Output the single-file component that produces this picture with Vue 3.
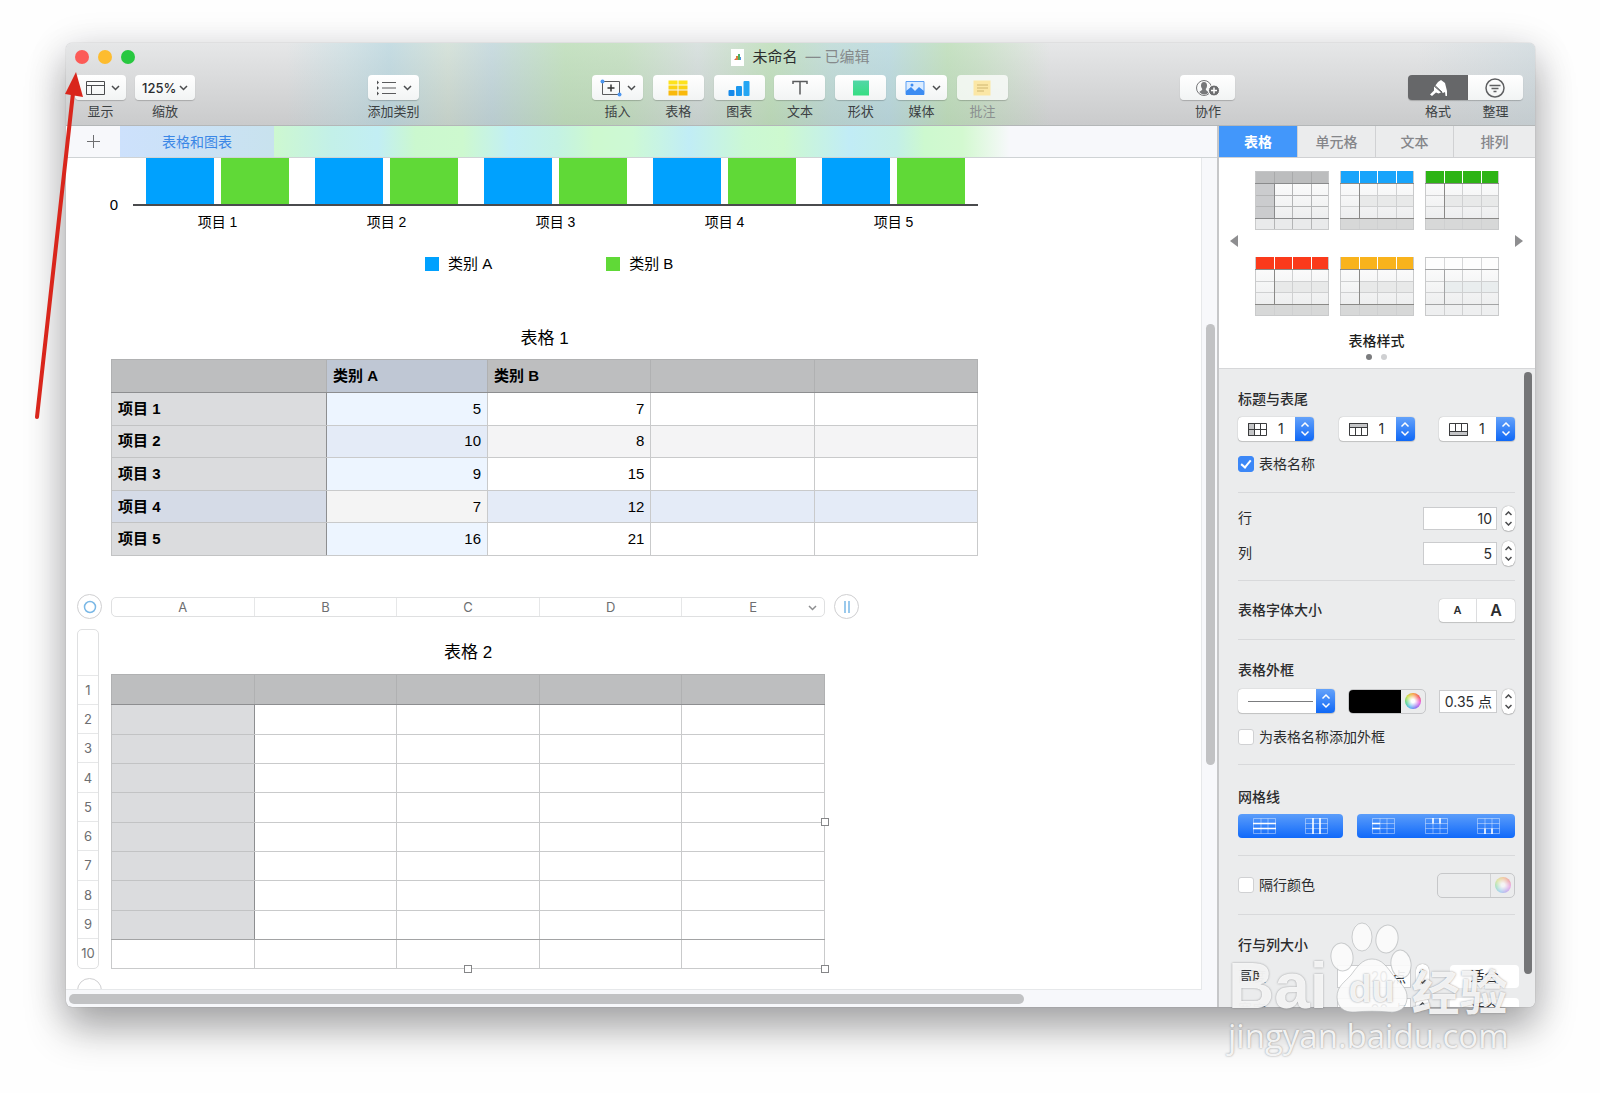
<template>
  <div class="desktop">
    <div class="window">
      <header class="toolbar">
        <div class="title-row">
          <div class="lights">
            <button class="light red" aria-label="关闭" />
            <button class="light yellow" aria-label="最小化" />
            <button class="light green" aria-label="缩放窗口" />
          </div>
          <div class="title">
            <svg width="13" height="17" viewBox="0 0 13 17">
              <rect width="13" height="17" fill="#fff" />
              <path d="M3 11l2-2v2z" fill="#e2574c" />
              <rect x="5" y="7" width="2" height="4" fill="#d9823b" />
              <rect x="7" y="5" width="2" height="6" fill="#4fae62" />
              <rect x="9" y="8" width="1" height="3" fill="#4a90d9" />
            </svg>
            <span>未命名</span>
            <span class="edited">— 已编辑</span>
          </div>
        </div>

        <div class="tools">
          <div v-for="(group, g) in toolGroups" :key="g" class="tool-group" :class="group.kind">
            <div v-for="t in group.items" :key="t.label" class="tool" :class="{ dim: t.dim, on: t.on }">
              <label v-if="t.zoom" class="tool-btn">
                <select v-model="zoom" class="zoom-select" aria-label="缩放">
                  <option>100%</option>
                  <option>125%</option>
                  <option>150%</option>
                </select>
                <svg class="chevron" width="9" height="6" viewBox="0 0 9 6"><path d="M1 1l3.500 3.500L8 1" /></svg>
              </label>
              <button v-else class="tool-btn" :aria-label="t.label">
                <svg width="24" height="20" viewBox="0 0 24 20" fill="none" v-html="icons[t.icon]" />
                <svg v-if="t.menu" class="chevron" width="9" height="6" viewBox="0 0 9 6"><path d="M1 1l3.500 3.500L8 1" /></svg>
              </button>
              <span class="tool-label">{{ t.label }}</span>
            </div>
          </div>
        </div>
      </header>

      <div class="body">
        <main class="editor">
          <nav class="sheets">
            <button class="add-sheet" aria-label="添加工作表">
              <svg width="13" height="13" viewBox="0 0 13 13"><path d="M6.500 0v13M0 6.500h13" stroke="#6d6e70" /></svg>
            </button>
            <button class="sheet-tab">表格和图表</button>
            <div class="sheet-blur" />
          </nav>

          <div class="canvas">
            <div class="sheet">
              <section class="chart">
                <div class="y-axis">0</div>
                <div class="plot">
                  <div v-for="n in 5" :key="n" class="category">
                    <div class="bars">
                      <i class="bar a" />
                      <i class="bar b" />
                    </div>
                    <span>项目 {{ n }}</span>
                  </div>
                </div>
              </section>
              <div class="legend">
                <span><i class="a" />类别 A</span>
                <span><i class="b" />类别 B</span>
              </div>

              <table class="grid first">
                <caption>表格 1</caption>
                <colgroup>
                  <col class="c0"><col class="c1"><col class="c2"><col class="c2"><col class="c2">
                </colgroup>
                <thead>
                  <tr><th /><th class="picked">类别 A</th><th>类别 B</th><th /><th /></tr>
                </thead>
                <tbody>
                  <tr v-for="(r, i) in rows" :key="i">
                    <th scope="row">项目 {{ i + 1 }}</th>
                    <td>{{ r[0] }}</td>
                    <td>{{ r[1] }}</td>
                    <td /><td />
                  </tr>
                </tbody>
              </table>

              <div class="table-frame">
                <button class="round" aria-label="移动表格">
                  <svg width="14" height="14" viewBox="0 0 14 14"><circle cx="7" cy="7" r="5.500" fill="none" stroke="#7ab8e6" stroke-width="1.500" /></svg>
                </button>
                <div class="col-bar">
                  <span v-for="c in 'ABCDE'" :key="c">{{ c }}</span>
                  <svg class="chevron col-menu" width="9" height="6" viewBox="0 0 9 6"><path d="M1 1l3.500 3.500L8 1" /></svg>
                </div>
                <button class="round" aria-label="添加列">
                  <svg width="14" height="14" viewBox="0 0 14 14"><path d="M5 1v12M9 1v12" stroke="#7ab8e6" stroke-width="1.500" /></svg>
                </button>

                <div class="row-bar">
                  <span class="row-title" />
                  <span v-for="n in 10" :key="n">{{ n }}</span>
                </div>
                <div class="second-wrap">
                  <table class="grid second">
                    <caption>表格 2</caption>
                    <thead>
                      <tr><th v-for="n in 5" :key="n" /></tr>
                    </thead>
                    <tbody>
                      <tr v-for="n in 8" :key="n"><th /><td v-for="m in 4" :key="m" /></tr>
                    </tbody>
                    <tfoot>
                      <tr><td v-for="n in 5" :key="n" /></tr>
                    </tfoot>
                  </table>
                  <i class="handle right" />
                  <i class="handle bottom" />
                  <i class="handle corner" />
                </div>
                <span />

                <button class="round" aria-label="添加行">
                  <svg width="14" height="14" viewBox="0 0 14 14"><path d="M1 6h12M1 10h12" stroke="#7ab8e6" stroke-width="1.500" /></svg>
                </button>
              </div>
            </div>
            <div class="v-track"><i /></div>
          </div>
          <div class="h-track"><i /></div>
        </main>

        <aside class="inspector">
          <nav class="tabs">
            <button v-for="t in tabs" :key="t" :class="{ active: t === tab }" @click="tab = t">{{ t }}</button>
          </nav>

          <div class="styles">
            <div class="style-row">
              <button class="pager" aria-label="上一页">
                <svg width="8" height="12" viewBox="0 0 8 12"><path d="M8 0v12L0 6z" fill="#8e8e90" /></svg>
              </button>
              <div class="thumbs">
                <button v-for="s in tableStyles" :key="s.head" class="thumb" :aria-label="s.name">
                  <svg width="74" height="59" viewBox="0 0 74 59">
                    <defs>
                      <linearGradient :id="'body-' + s.name" x2="0" y2="1">
                        <stop offset="0" stop-color="#fff" /><stop offset="1" stop-color="#e9eaeb" />
                      </linearGradient>
                    </defs>
                    <rect width="74" height="59" :fill="`url(#body-${s.name})`" />
                    <rect v-if="s.side" y="12" width="19" height="35" :fill="s.side" />
                    <rect v-if="!s.side" x="19" y="24" width="55" height="11" :fill="s.band" />
                    <rect y="47" width="74" height="12" :fill="s.foot" />
                    <path d="M0 24.500h74M0 35.500h74M19.500 12v47M37.500 12v47M56.500 12v47" :stroke="s.side ? '#b4b5b6' : '#cfd0d1'" />
                    <rect width="74" height="12" :fill="s.head" />
                    <path d="M19.500 0v12M37.500 0v12M56.500 0v12" :stroke="s.split" />
                    <path d="M.5 0v59M73.500 0v59M0 58.500h74" stroke="#c9cacb" />
                    <path d="M0 12.500h74M0 47.500h74M19.500 12v35" :stroke="s.rule" />
                    <path v-if="s.split !== '#fff'" d="M0 .5h74" stroke="#c4c5c6" />
                  </svg>
                </button>
              </div>
              <button class="pager" aria-label="下一页">
                <svg width="8" height="12" viewBox="0 0 8 12"><path d="M0 0v12l8-6z" fill="#8e8e90" /></svg>
              </button>
            </div>
            <h3>表格样式</h3>
            <div class="dots"><i class="current" /><i /></div>
          </div>

          <div class="panel">
            <section class="sec headers">
              <h4>标题与表尾</h4>
              <div class="line spread">
                <div v-for="p in counts" :key="p.name" class="popup">
                  <svg width="19" height="13" viewBox="0 0 19 13" fill="none" stroke="#3a3b3d" v-html="p.icon" />
                  <select v-model="p.value" :aria-label="p.name"><option>0</option><option>1</option><option>2</option></select>
                  <span class="updown"><svg width="10" height="16" viewBox="0 0 10 16"><path d="M1.500 5.500L5 2l3.500 3.500M1.500 10.500L5 14l3.500-3.500" /></svg></span>
                </div>
              </div>
              <label class="check"><input v-model="showName" type="checkbox">表格名称</label>
            </section>

            <section class="sec sizes">
              <div class="line">
                <label for="rowCount">行</label>
                <input id="rowCount" class="field wide" value="10">
                <span class="stepper"><button aria-label="增加行"><svg width="7" height="5" viewBox="0 0 7 5"><path d="M.5 4l3-3 3 3" /></svg></button><button aria-label="减少行"><svg width="7" height="5" viewBox="0 0 7 5"><path d="M.5 1l3 3 3-3" /></svg></button></span>
              </div>
              <div class="line">
                <label for="colCount">列</label>
                <input id="colCount" class="field wide" value="5">
                <span class="stepper"><button aria-label="增加列"><svg width="7" height="5" viewBox="0 0 7 5"><path d="M.5 4l3-3 3 3" /></svg></button><button aria-label="减少列"><svg width="7" height="5" viewBox="0 0 7 5"><path d="M.5 1l3 3 3-3" /></svg></button></span>
              </div>
            </section>

            <section class="sec">
              <div class="line">
                <h4>表格字体大小</h4>
                <div class="font-size">
                  <button class="small" aria-label="缩小字体">A</button>
                  <button class="big" aria-label="放大字体">A</button>
                </div>
              </div>
            </section>

            <section class="sec outline">
              <h4>表格外框</h4>
              <div class="line spread">
                <div class="popup stroke">
                  <select aria-label="外框线型"><option>&nbsp;</option></select>
                  <span class="updown"><svg width="10" height="16" viewBox="0 0 10 16"><path d="M1.500 5.500L5 2l3.500 3.500M1.500 10.500L5 14l3.500-3.500" /></svg></span>
                </div>
                <div class="well black">
                  <button class="color" aria-label="外框颜色" />
                  <button class="wheel" aria-label="色盘"><i /></button>
                </div>
                <div class="line">
                  <input class="field points" value="0.35 点" aria-label="外框粗细">
                  <span class="stepper"><button aria-label="加粗"><svg width="7" height="5" viewBox="0 0 7 5"><path d="M.5 4l3-3 3 3" /></svg></button><button aria-label="减细"><svg width="7" height="5" viewBox="0 0 7 5"><path d="M.5 1l3 3 3-3" /></svg></button></span>
                </div>
              </div>
              <label class="check"><input type="checkbox">为表格名称添加外框</label>
            </section>

            <section class="sec gridlines">
              <h4>网格线</h4>
              <div class="line toggles">
                <div v-for="(set, i) in gridToggles" :key="i" class="toggle-set" :class="{ three: set.length === 3 }">
                  <button v-for="b in set" :key="b.name" :aria-label="b.name">
                    <svg width="23" height="16" viewBox="0 0 23 16" fill="none">
                      <path d="M.5.5h22v15H.5zM.5 5.500h22M.5 10.500h22M8 .5v15M15 .5v15" stroke="#fff" stroke-opacity=".4" />
                      <path :d="b.d" stroke="#fff" stroke-width="1.500" />
                    </svg>
                  </button>
                </div>
              </div>
            </section>

            <section class="sec">
              <div class="line">
                <label class="check"><input type="checkbox">隔行颜色</label>
                <div class="well off">
                  <button class="color" disabled aria-label="隔行颜色" />
                  <button class="wheel" disabled aria-label="隔行色盘"><i /></button>
                </div>
              </div>
            </section>

            <section class="sec dims">
              <h4>行与列大小</h4>
              <div v-for="d in dims" :key="d.name" class="line">
                <label :for="d.id">{{ d.name }}</label>
                <input :id="d.id" class="field wide" :value="d.value">
                <span class="stepper"><button :aria-label="'增加' + d.name"><svg width="7" height="5" viewBox="0 0 7 5"><path d="M.5 4l3-3 3 3" /></svg></button><button :aria-label="'减少' + d.name"><svg width="7" height="5" viewBox="0 0 7 5"><path d="M.5 1l3 3 3-3" /></svg></button></span>
                <button class="fit">适合</button>
              </div>
            </section>
            <i class="panel-thumb" />
          </div>
        </aside>
      </div>
    </div>

    <!-- 红色箭头 -->
    <svg class="arrow" width="60" height="350" viewBox="0 0 60 350">
      <path d="M8 346L44 22" stroke="#d9261c" stroke-width="4" stroke-linecap="round" />
      <path d="M47 1L36 23l18 3z" fill="#d9261c" />
    </svg>

    <!-- 水印 -->
    <div class="watermark">
      <div class="mark-row">
        <span class="bai">Bai</span>
        <span class="paw">
          <svg width="84" height="92" viewBox="0 0 84 92" fill="#fbfbfb" fill-opacity=".92" stroke="#aeb0b2" stroke-opacity=".6">
            <ellipse cx="14" cy="35" rx="11" ry="14" transform="rotate(-8 14 35)" />
            <ellipse cx="34" cy="15" rx="10" ry="14" />
            <ellipse cx="59" cy="17" rx="11" ry="14" transform="rotate(10 59 17)" />
            <ellipse cx="73" cy="42" rx="10" ry="14" transform="rotate(-8 73 42)" />
            <path d="M44 37c10 0 15 8 21 16 6 8 15 12 14 24-1 10-9 14-18 13-11-1-23-1-34 0C16 91 9 85 9 75c0-11 8-15 14-22 6-8 11-16 21-16z" />
          </svg>
          <span class="du">du</span>
        </span>
        <span class="jy">经验</span>
      </div>
      <div class="mark-url">jingyan.baidu.com</div>
    </div>
  </div>
</template>

<script setup>
import { ref, reactive } from 'vue'

const zoom = ref('125%')
const tab = ref('表格')
const tabs = ['表格', '单元格', '文本', '排列']
const showName = ref(true)

const rows = [[5, 7], [10, 8], [9, 15], [7, 12], [16, 21]]

const toolGroups = [
  { kind: 'left', items: [
    { label: '显示', icon: 'view', menu: true },
    { label: '缩放', zoom: true }
  ] },
  { kind: 'single', items: [{ label: '添加类别', icon: 'list', menu: true }] },
  { kind: 'insert', items: [
    { label: '插入', icon: 'insert', menu: true },
    { label: '表格', icon: 'table' },
    { label: '图表', icon: 'chart' },
    { label: '文本', icon: 'text' },
    { label: '形状', icon: 'shape' },
    { label: '媒体', icon: 'media', menu: true },
    { label: '批注', icon: 'note', dim: true }
  ] },
  { kind: 'share', items: [{ label: '协作', icon: 'people' }] },
  { kind: 'segment', items: [
    { label: '格式', icon: 'brush', on: true },
    { label: '整理', icon: 'filter' }
  ] }
]

const icons = {
  view: '<path d="M4.500 3.500h18v13h-18zM4.500 7.500h18M9.500 7.500v9" stroke="#4b4c4e"/>',
  list: '<path d="M8 4.500h14M8 10h14M8 15.500h14" stroke="#5a5b5d"/><path d="M3 2.500v4l2-2zM3 8v4l2-2zM3 13.500v4l2-2z" fill="#4b4c4e"/>',
  insert: '<path d="M4.500 3.500h17v13h-17z" stroke="#5a5b5d"/><path d="M13 6.500v7M9.500 10h7" stroke="#333" stroke-width="1.500"/><circle cx="4.500" cy="3.500" r="2" fill="#4c96f0"/><circle cx="21.500" cy="16.500" r="2" fill="#4c96f0"/>',
  table: '<path d="M2.500 2.500h9v4h-9zM12.500 2.500h9v4h-9z" fill="#fde21c"/><path d="M2.500 7.500h9v4h-9zM12.500 7.500h9v4h-9z" fill="#fbd312"/><path d="M2.500 12.500h9v5h-9zM12.500 12.500h9v5h-9z" fill="#f9b90b"/>',
  chart: '<rect x="1.500" y="12" width="6" height="6" rx="1" fill="#1689ea"/><rect x="9" y="8" width="6" height="10" rx="1" fill="#1b97ee"/><rect x="16.500" y="3" width="6" height="15" rx="1" fill="#25a6f3"/>',
  text: '<path d="M5 6V3.500h14V6M12 3.500v13" stroke="#5a5b5d" stroke-width="1.500"/>',
  shape: '<defs><linearGradient id="g-shape" x2="0" y2="1"><stop stop-color="#52d6a8"/><stop offset="1" stop-color="#36de82"/></linearGradient></defs><rect x="4" y="2.500" width="16" height="15" fill="url(#g-shape)"/>',
  media: '<path d="M3 3.500h18v13H3z" fill="#dcecff" stroke="#5b9ff5"/><path d="M3 13l5-4 4 4 4-4 5 4v4H3z" fill="#3d8cf2"/><circle cx="9" cy="7" r="1.500" fill="#3d8cf2"/>',
  note: '<path d="M3.500 2.500h17v15h-17z" fill="#fbe7a6"/><path d="M7 7h11M7 10h11M7 13h7" stroke="#cfb670"/>',
  people: '<circle cx="8" cy="10" r="7.500" stroke="#77787a"/><path d="M8 4c-2 0-3 1.500-3 3.500 0 1.700.7 2.700 1.300 3.400 0 1.600-1.800 1.600-3 3.100A6.500 6.500 0 0 0 8 16.500c2 0 3.500-.7 4.500-2-1-1.600-2.800-1.900-2.800-3.500C10.300 10.300 11 9.300 11 7.500 11 5.500 10 4 8 4z" fill="#77787a"/><circle cx="18" cy="12.500" r="5.500" fill="#6b6c6e" stroke="#fff"/><path d="M18 9.500v6M15 12.500h6" stroke="#fff" stroke-width="1.500"/>',
  brush: '<path d="M12 4l3-2 4 3 2 8v5h-1.500l-.500-4-2 1-8-7z" fill="#fff"/><path d="M8 8.500l7 6-2.500 1-2.500-1-4 3.500-2-1.500 4-4z" fill="#fff"/><path d="M9 7.500l7 6.500" stroke="#666769"/>',
  filter: '<circle cx="12" cy="10" r="9" stroke="#5f6062" stroke-width="1.500"/><path d="M6.500 7.500h11M8.500 10.500h7M10.500 13.500h3" stroke="#5f6062" stroke-width="1.500"/>'
}

const tableStyles = [
  { name: 'gray', head: '#bcbdbe', split: '#a9aaab', side: '#cbccce', foot: '#e9eaeb', rule: '#8a8b8c' },
  { name: 'blue', head: '#18a4fb', split: '#fff', band: '#e8e9e9', foot: '#d7d8d8', rule: '#8a8987' },
  { name: 'green', head: '#2db415', split: '#fff', band: '#e8e9e9', foot: '#d7d8d8', rule: '#8a8987' },
  { name: 'red', head: '#fb3a1b', split: '#fff', band: '#e8e9e9', foot: '#d7d8d8', rule: '#8a8987' },
  { name: 'orange', head: '#f9b31c', split: '#fff', band: '#e8e9e9', foot: '#d7d8d8', rule: '#8a8987' },
  { name: 'plain', head: '#fdfdfd', split: '#d5d6d7', band: '#e9edee', foot: '#eeeff0', rule: '#a3a4a5' }
]

const counts = reactive([
  { name: '标题列', value: '1', icon: '<path d="M.5.5h6v12h-6z" fill="#c4c5c7"/><path d="M.5.5h18v12H.5zM.5 6.500h18M6.500.5v12M12.500.5v12"/>' },
  { name: '标题行', value: '1', icon: '<path d="M.5.5h18v4H.5z" fill="#c4c5c7"/><path d="M.5.5h18v12H.5zM6.500 4.500v8M12.500 4.500v8"/>' },
  { name: '表尾行', value: '1', icon: '<path d="M.5 8.500h18v4H.5z" fill="#c4c5c7"/><path d="M.5.5h18v12H.5zM6.500.5v8M12.500.5v8"/>' }
])

const gridToggles = [
  [
    { name: '正文水平线', d: 'M0 5.500h23M0 10.500h23' },
    { name: '正文垂直线', d: 'M8 0v16M15 0v16' }
  ],
  [
    { name: '标题列线', d: 'M0 5.500h8M0 10.500h8' },
    { name: '标题行线', d: 'M8 0v5.500M15 0v5.500' },
    { name: '表尾行线', d: 'M8 10.500V16M15 10.500V16' }
  ]
]

const dims = [
  { id: 'rowHeight', name: '高度', value: '20 点' },
  { id: 'colWidth', name: '宽度', value: '98 点' }
]
</script>

<style>
body {
  margin: 0;
  background: #fefefe;
}
</style>

<style scoped>
.desktop {
  position: relative;
  box-sizing: border-box;
  height: 100vh;
  padding: 43px 65px 86px 66px;
  overflow: hidden;
  font: 14px/20px Inter, "Noto Sans CJK SC", sans-serif;
  color: #2b2c2e;
}
button,
input,
select {
  box-sizing: border-box;
  margin: 0;
  padding: 0;
  border: 0;
  outline: 0;
  background: none;
  font: inherit;
  color: inherit;
  appearance: none;
}
h3,
h4 {
  margin: 0;
  font-size: 14px;
  font-weight: 500;
}
svg {
  display: block;
  flex: none;
}

/* 窗口 */
.window {
  display: flex;
  flex-direction: column;
  height: 100%;
  border-radius: 6px;
  overflow: hidden;
  background: #f7f8fb;
  box-shadow: 0 0 1px rgba(0, 0, 0, 0.4), 0 22px 40px rgba(0, 0, 0, 0.3), 0 6px 40px rgba(20, 20, 40, 0.14);
}

/* 工具栏 */
.toolbar {
  box-sizing: border-box;
  flex: none;
  height: 83px;
  border-bottom: 1px solid #b4b7b8;
  background:
    linear-gradient(90deg, transparent 15%, rgba(160, 215, 225, 0.25) 19%, rgba(150, 205, 220, 0.4) 22%, rgba(170, 215, 180, 0.25) 26%, rgba(150, 200, 210, 0.35) 29%, rgba(160, 220, 150, 0.45) 34%, rgba(160, 220, 150, 0.4) 38%, rgba(180, 210, 200, 0.25) 43%, rgba(160, 220, 150, 0.45) 48%, rgba(150, 210, 200, 0.4) 52%, rgba(150, 210, 220, 0.45) 56%, rgba(160, 220, 150, 0.45) 60%, rgba(160, 220, 150, 0.35) 62%, transparent 67%, transparent 92%, rgba(180, 205, 215, 0.3)),
    linear-gradient(#e6e7e8, #cacbcc);
}
.title-row {
  display: grid;
  grid-template-columns: 1fr auto 1fr;
  align-items: center;
  height: 28px;
}
.lights {
  display: flex;
  gap: 9px;
  padding-left: 9px;
}
.light {
  width: 14px;
  height: 14px;
  border-radius: 50%;
}
.red { background: #fc5b57; }
.yellow { background: #fdbc2f; }
.green { background: #28c840; }
.title {
  display: flex;
  align-items: center;
  gap: 8px;
  font-size: 15px;
}
.edited { color: #85898b; }
.tools {
  display: flex;
  justify-content: space-between;
  padding: 4px 12px 0 9px;
}
.tool-group {
  display: flex;
  gap: 9px;
}
.tool-group.insert {
  width: 416px;
  gap: 0;
  justify-content: space-between;
}
.tool-group.segment { gap: 0; }
.tool {
  display: flex;
  flex-direction: column;
  align-items: center;
  gap: 1px;
}
.tool-btn {
  display: flex;
  align-items: center;
  justify-content: center;
  gap: 5px;
  min-width: 51px;
  height: 25px;
  border-radius: 4px;
  background: linear-gradient(#fff, #f2f4f4);
  box-shadow: 0 1px 1px rgba(0, 0, 0, 0.2);
}
.left label.tool-btn { width: 60px; gap: 3px; }
.share .tool-btn,
.segment .tool-btn { width: 55px; }
.segment .tool-btn { border-radius: 0 4px 4px 0; }
.segment .on .tool-btn {
  width: 60px;
  border-radius: 4px 0 0 4px;
  background: #666769;
}
.zoom-select {
  width: 34px;
  font-size: 13px;
  font-weight: 500;
}
.tool-label {
  font-size: 13px;
  color: #3c4143;
}
.dim .tool-label { color: #8b9090; }
.dim .tool-btn { background: rgba(255, 255, 255, 0.75); }
.chevron path {
  fill: none;
  stroke: #4b4c4e;
  stroke-width: 1.5;
}

.body {
  display: flex;
  flex: 1;
  min-height: 0;
}
.editor {
  display: flex;
  flex: 1;
  flex-direction: column;
  min-width: 0;
}

/* 工作表标签 */
.sheets {
  display: flex;
  flex: none;
  height: 31px;
  border-bottom: 1px solid #cfd3d5;
}
.add-sheet {
  display: flex;
  align-items: center;
  justify-content: center;
  width: 54px;
}
.sheet-tab {
  width: 154px;
  background: linear-gradient(90deg, #cde1fc, #c8e2ee);
  color: #3b87e6;
}
.sheet-blur {
  flex: 1;
  background: linear-gradient(90deg, #cdf8d0, #c3f0e8 6%, #c2eef4 11%, #cbf8cf 15%, #cdf9cf 20%, #c2eff4 25%, #c4f2e4 30%, #cdf9cf 34%, #cdf9d5 38%, #c1edf6 44%, #cbf8d4 50%, #cdf9cf 54%, #c1ecf6 61%, #c3efe8 66%, #cdf9cf 69%, #d3f9d0 73%, #f7f8fb 78%);
}

/* 画布 */
.canvas {
  display: flex;
  flex: 1;
  min-height: 0;
}
.sheet {
  flex: 1;
  min-width: 0;
  overflow: hidden;
  border: solid #e6e8ea;
  border-width: 0 1px 1px 0;
  background: #fff;
  color: #000;
  font-family: "Liberation Sans", "Noto Sans CJK SC", sans-serif;
}
.v-track { width: 15px; }
.v-track i {
  display: block;
  width: 9px;
  height: 53%;
  margin: 166px auto 0 4px;
  border-radius: 5px;
  background: #c1c2c4;
}
.h-track {
  flex: none;
  height: 17px;
}
.h-track i {
  display: block;
  width: 83%;
  height: 10px;
  margin: 4px 3px;
  border-radius: 5px;
  background: #c1c2c4;
}

/* 图表 */
.chart { display: flex; }
.y-axis {
  box-sizing: border-box;
  width: 67px;
  padding: 37px 15px 0 0;
  font-size: 15px;
  text-align: right;
}
.plot {
  display: grid;
  grid-template-columns: repeat(5, 169px);
}
.category {
  display: flex;
  flex-direction: column;
  gap: 6px;
  text-align: center;
}
.bars {
  display: flex;
  justify-content: center;
  gap: 7px;
  height: 46px;
  border-bottom: 2px solid #4a4b4d;
}
.bar { width: 68px; }
.a { background: #00a1fe; }
.b { background: #60d937; }
.legend {
  display: flex;
  gap: 114px;
  margin: 22px 0 0 359px;
  font-size: 15px;
}
.legend span {
  display: flex;
  align-items: center;
  gap: 9px;
}
.legend i {
  width: 14px;
  height: 14px;
}

/* 表格 */
.grid {
  border-collapse: collapse;
  table-layout: fixed;
  font-size: 15px;
}
.grid caption {
  padding-top: 4px;
  font-size: 17px;
  line-height: 40px;
}
.grid th,
.grid td {
  box-sizing: border-box;
  padding: 0 6px;
  border: 1px solid #c9cacb;
  text-align: right;
}
.grid th {
  background: #dbdcde;
  border-color: #c2c3c4;
  text-align: left;
}
.grid tbody th { border-right-color: #8d8e90; }
.grid thead th {
  background: #bdbebf;
  border-color: #b0b1b2;
  border-bottom-color: #8d8e90;
}
.grid thead th:first-child { border-right-color: #b0b1b2; }
.first {
  width: 867px;
  height: 197px;
  margin: 41px 0 0 45px;
}
.second-wrap,
.second { width: 714px; }
.first tr { height: 33px; }
.first tbody tr { height: 32px; }
.c0 { width: 215px; }
.c1 { width: 161px; }
.first thead .picked { background: #bfc7d4; }
.first td:nth-child(2) { background: #edf5ff; }
.first tr:nth-child(2) td { background: #f4f4f5; }
.first tr:nth-child(2) td:nth-child(2) { background: #e4ebf7; }
.first tr:nth-child(4) th { background: #d5dbe7; }
.first tr:nth-child(4) td { background: #e4ebf7; }
.first tr:nth-child(4) td:nth-child(2) { background: #f4f4f4; }

.table-frame {
  display: grid;
  grid-template-columns: 25px 714px 25px;
  align-items: center;
  gap: 9px;
  margin: 38px 0 0 11px;
}
.round {
  display: flex;
  align-items: center;
  justify-content: center;
  width: 25px;
  height: 25px;
  border: 1px solid #cfcfd1;
  border-radius: 50%;
}
.col-bar,
.row-bar {
  position: relative;
  box-sizing: border-box;
  display: flex;
  border: 1px solid #dfe0e1;
  border-radius: 5px;
  color: #6d6e70;
  font: 13px/18px Inter, sans-serif;
  text-align: center;
}
.col-bar { height: 20px; }
.col-bar span { flex: 1; }
.col-bar span + span { border-left: 1px solid #e6e7e8; }
.col-menu {
  position: absolute;
  right: 7px;
  top: 7px;
}
.col-menu path { stroke: #8d8e90; }
.row-bar {
  flex-direction: column;
  width: 22px;
  height: 340px;
}
.row-bar span {
  display: flex;
  flex: 1;
  align-items: center;
  justify-content: center;
}
.row-bar .row-title { flex: 0 0 45px; }
.row-bar span + span {
  box-sizing: border-box;
  border-top: 1px solid #e6e7e8;
}
.second-wrap { position: relative; }
.second thead tr { height: 30px; }
.second tbody tr,
.second tfoot tr { height: 29px; }
.second tbody tr:nth-child(3n + 1) { height: 30px; }
.second caption { line-height: 42px; }
.second tbody tr:last-child th,
.second tbody tr:last-child td { border-bottom-color: #a2a3a4; }
.handle {
  position: absolute;
  box-sizing: border-box;
  width: 8px;
  height: 8px;
  border: 1px solid #858688;
  background: #fff;
}
.right { right: -4px; bottom: 143px; }
.corner { right: -4px; bottom: -4px; }
.bottom { left: 353px; bottom: -4px; }

/* 检查器 */
.inspector {
  display: flex;
  flex: 0 0 316px;
  flex-direction: column;
  min-width: 0;
  border-left: 2px solid #c6c7c9;
  background: #ebeced;
}
.tabs {
  display: grid;
  flex: none;
  grid-template-columns: 78px 78px 78px 1fr;
  height: 31px;
  border-bottom: 1px solid #d0d1d3;
}
.tabs button {
  border-left: 1px solid #d0d1d3;
  color: #85868a;
  font-weight: 500;
}
.tabs button:first-child { border: 0; }
.tabs .active {
  background: #4297fb;
  color: #fff;
  font-weight: 700;
}
.styles {
  flex: none;
  padding: 13px 12px 8px 11px;
  border-bottom: 1px solid #d6d7d9;
  background: #fff;
}
.style-row {
  display: flex;
  align-items: center;
  justify-content: space-between;
}
.pager { margin-bottom: 6px; }
.thumbs {
  display: grid;
  grid-template-columns: repeat(3, 74px);
  gap: 27px 11px;
}
.styles h3 {
  margin-top: 15px;
  color: #1d1e20;
  text-align: center;
}
.dots {
  display: flex;
  justify-content: center;
  gap: 9px;
  margin-top: 3px;
}
.dots i {
  width: 6px;
  height: 6px;
  border-radius: 50%;
  background: #cfd0d2;
}
.dots .current { background: #7b7c7e; }

.panel {
  position: relative;
  flex: 1;
  min-height: 0;
  padding: 0 20px 0 19px;
  overflow: hidden;
}
.panel-thumb {
  position: absolute;
  top: 3px;
  right: 3px;
  bottom: 33px;
  width: 8px;
  border-radius: 4px;
  background: #747577;
}
.sec {
  padding: 17px 0;
  border-bottom: 1px solid #d8d9db;
}
.line {
  display: flex;
  align-items: center;
  gap: 5px;
  height: 24px;
}
.spread { justify-content: space-between; }
.line > label,
.line > h4 { margin-right: auto; }
.headers { padding: 20px 0 18px; }
.headers .line { margin: 8px 0 13px; }
.sizes {
  display: grid;
  gap: 11px;
  padding: 13px 0 15px;
}
.outline { padding-top: 20px; }
.outline > .line { margin: 9px 0 14px; }
.gridlines { padding-top: 22px; }
.gridlines .line { margin-top: 7px; }
.dims {
  display: grid;
  gap: 9px;
  padding-top: 20px;
}
.check {
  display: flex;
  align-items: center;
  gap: 5px;
}
.check input {
  width: 16px;
  height: 16px;
  border: 1px solid #d0d1d3;
  border-radius: 3px;
  background: #fff;
}
.check input:checked {
  border-color: #3b87f7;
  background: #3b87f7;
}
.check input:checked::after {
  content: "";
  display: block;
  width: 4px;
  height: 8px;
  margin: 1px auto;
  border: solid #fff;
  border-width: 0 2px 2px 0;
  transform: rotate(40deg);
}
.popup {
  display: flex;
  align-items: center;
  box-sizing: border-box;
  width: 76px;
  height: 24px;
  padding-left: 10px;
  border-radius: 4px;
  background: #fff;
  box-shadow: 0 0 1px rgba(0, 0, 0, 0.4), 0 1px 1px rgba(0, 0, 0, 0.15);
}
.popup select {
  flex: 1;
  width: 20px;
  height: 24px;
  padding-left: 11px;
}
.updown {
  display: flex;
  align-items: center;
  justify-content: center;
  width: 19px;
  height: 24px;
  border-radius: 0 4px 4px 0;
  background: linear-gradient(#64a2fa, #0f68f6);
  pointer-events: none;
}
.updown path {
  fill: none;
  stroke: #fff;
  stroke-width: 1.5;
}
.stroke { width: 97px; }
.stroke select {
  background: linear-gradient(#7b7c7e, #7b7c7e) left center / 65px 1px no-repeat;
}
.field {
  height: 23px;
  padding: 0 4px;
  border: 1px solid #cbccce;
  background: #fff;
  text-align: right;
}
.field.wide { width: 74px; }
.field.points { width: 58px; }
.stepper {
  display: flex;
  flex-direction: column;
  justify-content: center;
  width: 13px;
  height: 25px;
  border-radius: 6px;
  background: #fff;
  box-shadow: 0 0 1px rgba(0, 0, 0, 0.5), 0 1px 1px rgba(0, 0, 0, 0.15);
}
.stepper button {
  display: flex;
  align-items: center;
  justify-content: center;
  height: 10px;
}
.stepper path {
  fill: none;
  stroke: #4b4c4e;
  stroke-width: 1.5;
}
.font-size {
  display: grid;
  grid-template-columns: 38px 38px;
  height: 23px;
  border-radius: 4px;
  background: #fff;
  box-shadow: 0 0 1px rgba(0, 0, 0, 0.4), 0 1px 1px rgba(0, 0, 0, 0.15);
  font-weight: 600;
}
.small {
  border-right: 1px solid #dcdddf;
  font-size: 11px;
}
.big { font-size: 16px; }
.well {
  box-sizing: border-box;
  display: flex;
  width: 78px;
  height: 25px;
  border: 1px solid #c6c7c9;
  border-radius: 5px;
  overflow: hidden;
}
.well .color { flex: 1; }
.black .color { background: #000; }
.wheel {
  display: flex;
  align-items: center;
  justify-content: center;
  width: 24px;
}
.off .wheel { border-left: 1px solid #d0d1d3; }
.wheel i {
  width: 16px;
  height: 16px;
  border-radius: 50%;
  background:
    radial-gradient(#fff 15%, rgba(255, 255, 255, 0) 68%),
    conic-gradient(#f7a13d, #f25555, #e65de0, #8b6cf0, #55b5f2, #55d68a, #c8dd45, #f7a13d);
}
.off .wheel i { opacity: 0.45; }
.toggles { gap: 14px; }
.toggle-set {
  display: flex;
  flex: 2;
  height: 24px;
  border-radius: 4px;
  background: linear-gradient(#5b9dfa, #1069fa);
}
.toggle-set.three { flex: 3; }
.toggle-set button {
  display: flex;
  flex: 1;
  align-items: center;
  justify-content: center;
}
.fit {
  width: 69px;
  height: 23px;
  margin: 0 -4px 0 16px;
  border-radius: 4px;
  background: #fff;
}

/* 覆盖层 */
.arrow {
  position: absolute;
  top: 71px;
  left: 29px;
}
.watermark {
  position: absolute;
  top: 922px;
  right: 86px;
  width: 286px;
  color: rgba(251, 251, 251, 0.92);
  text-shadow: 0 0 2px rgba(90, 92, 95, 0.65);
  pointer-events: none;
}
.mark-row {
  display: flex;
  align-items: flex-end;
  height: 92px;
}
.bai {
  font: 700 64px/56px "Liberation Sans", sans-serif;
}
.paw {
  position: relative;
  width: 84px;
  height: 92px;
}
.du {
  position: absolute;
  left: 4px;
  right: 0;
  bottom: 6px;
  font: 700 38px/38px "Liberation Sans", sans-serif;
  text-align: center;
}
.jy {
  font: 700 48px/50px "Noto Sans CJK SC", sans-serif;
}
.mark-url {
  font: 33px/44px "Open Sans", sans-serif;
}
</style>
